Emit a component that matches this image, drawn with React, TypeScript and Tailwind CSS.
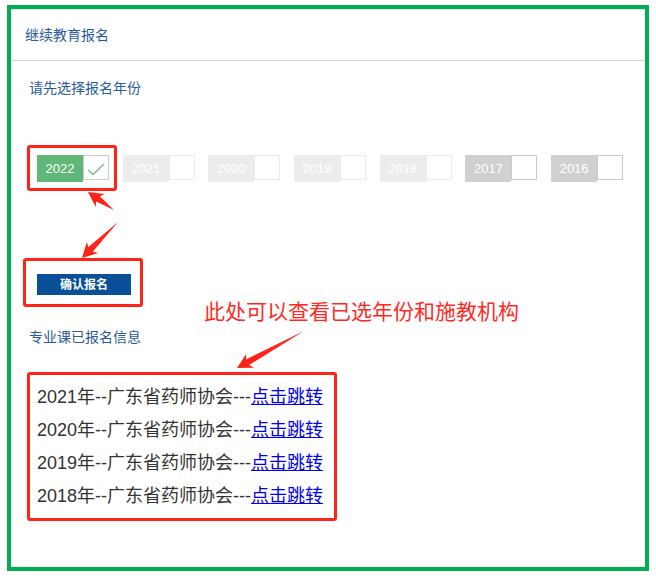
import React from "react";

type Pt = [number, number];

// Red annotation arrow: a thin wedge shaft with a barbed head
const arrowPoints = (tail: Pt, tip: Pt) => {
    const [tx, ty] = tail;
    const [hx, hy] = tip;
    const dx = hx - tx;
    const dy = hy - ty;
    const len = Math.hypot(dx, dy);
    const ux = dx / len;
    const uy = dy / len;
    const nx = -uy;
    const ny = ux;
    const headLen = 15;
    const headW = 8;
    const shaftW = 3.2;
    const bx = hx - ux * headLen;
    const by = hy - uy * headLen;
    const nb = 3; // notch back
    const p: Pt[] = [
        [tx, ty],
        [bx + ux * nb + nx * shaftW, by + uy * nb + ny * shaftW],
        [bx + nx * headW, by + ny * headW],
        [hx, hy],
        [bx - nx * headW, by - ny * headW],
        [bx + ux * nb - nx * shaftW, by + uy * nb - ny * shaftW],
    ];
    return p.map((q) => q.join(",")).join(" ");
};

const years = [
    { y: "2022", state: "checked" },
    { y: "2021", state: "off" },
    { y: "2020", state: "off" },
    { y: "2019", state: "off" },
    { y: "2018", state: "off" },
    { y: "2017", state: "gray" },
    { y: "2016", state: "gray" },
];

const records = ["2021", "2020", "2019", "2018"];

const App = () => {
    return (
        <div
            className="relative w-[656px] h-[578px] bg-white pt-[5px] pl-[7px] overflow-hidden"
            style={{ fontFamily: '"Liberation Sans", "Noto Sans CJK SC", sans-serif' }}
        >
            {/* Green outer frame */}
            <div className="w-[642px] h-[566px] border-4 border-[#00ae4f]">
                {/* Panel header */}
                <div className="h-[52px] border-t border-b border-t-[#e3e6ea] border-b-[#cdd5dc] flex items-center pl-[14px] text-[14px] text-[#2a5a9c]">
                    继续教育报名
                </div>

                <div className="mt-[17px] pl-[18px] text-[14px] leading-[20px] text-[#2a5a9c]">
                    请先选择报名年份
                </div>

                {/* Year options */}
                <div className="mt-[57px] pl-[26px] flex gap-[13.7px]">
                    {years.map((it) => (
                        <div key={it.y} className="flex items-start">
                            <div
                                className={
                                    "w-[46px] h-[27px] flex items-center justify-center text-[13px] text-white " +
                                    (it.state === "checked"
                                        ? "bg-[#60b878]"
                                        : it.state === "gray"
                                        ? "bg-[#d0d0d0]"
                                        : "bg-[#ececec]")
                                }
                            >
                                {it.y}
                            </div>
                            <div
                                className={
                                    "w-[26px] h-[25px] bg-white border " +
                                    (it.state === "off" ? "border-[#ebebeb]" : "border-[#cacaca]")
                                }
                            >
                                {it.state === "checked" && (
                                    <svg width="26" height="25" viewBox="0 0 26 25">
                                        <polyline
                                            points="4,14 9,18.5 20,8"
                                            fill="none"
                                            stroke="#7dbb8a"
                                            strokeWidth="1.4"
                                        />
                                    </svg>
                                )}
                            </div>
                        </div>
                    ))}
                </div>

                {/* Confirm button box */}
                <div className="mt-[76px] ml-[12px] w-[120px] h-[49px] border-[3px] border-[#ff2417] rounded-[3px] pl-[11px] pt-[13px]">
                    <button className="w-[94px] h-[21px] bg-[#0a5098] text-white text-[12px] font-bold flex items-center justify-center">
                        确认报名
                    </button>
                </div>

                <div className="mt-[20px] pl-[18px] text-[14px] leading-[20px] text-[#2a5a9c]">
                    专业课已报名信息
                </div>

                {/* Registered records */}
                <div className="mt-[25px] ml-[16px] w-[310px] h-[149px] border-[3px] border-[#ff2417] rounded-[3px] pl-[7px] pt-[6px]">
                    {records.map((r) => (
                        <div key={r} className="h-[33px] flex items-center text-[18px] text-[#333333] whitespace-nowrap">
                            {r}年--广东省药师协会---
                            <a href="#" className="text-[#0000ee] underline">
                                点击跳转
                            </a>
                        </div>
                    ))}
                </div>
            </div>

            {/* Annotation box around 2022 */}
            <div className="absolute left-[27px] top-[145px] w-[90px] h-[46px] border-[3px] border-[#ff2417] rounded-[3px]" />

            {/* Annotation note */}
            <div className="absolute left-[204px] top-[299px] text-[21px] leading-[26px] text-[#ff2a1f] whitespace-nowrap">
                此处可以查看已选年份和施教机构
            </div>

            {/* Arrows */}
            <svg className="absolute left-0 top-0 pointer-events-none" width="656" height="578" viewBox="0 0 656 578">
                <polygon points={arrowPoints([114, 210], [88, 192])} fill="#ff2417" />
                <polygon points={arrowPoints([118, 222], [82, 258])} fill="#ff2417" />
                <polygon points={arrowPoints([304, 331], [237, 368])} fill="#ff2417" />
            </svg>
        </div>
    );
};

export default App;
